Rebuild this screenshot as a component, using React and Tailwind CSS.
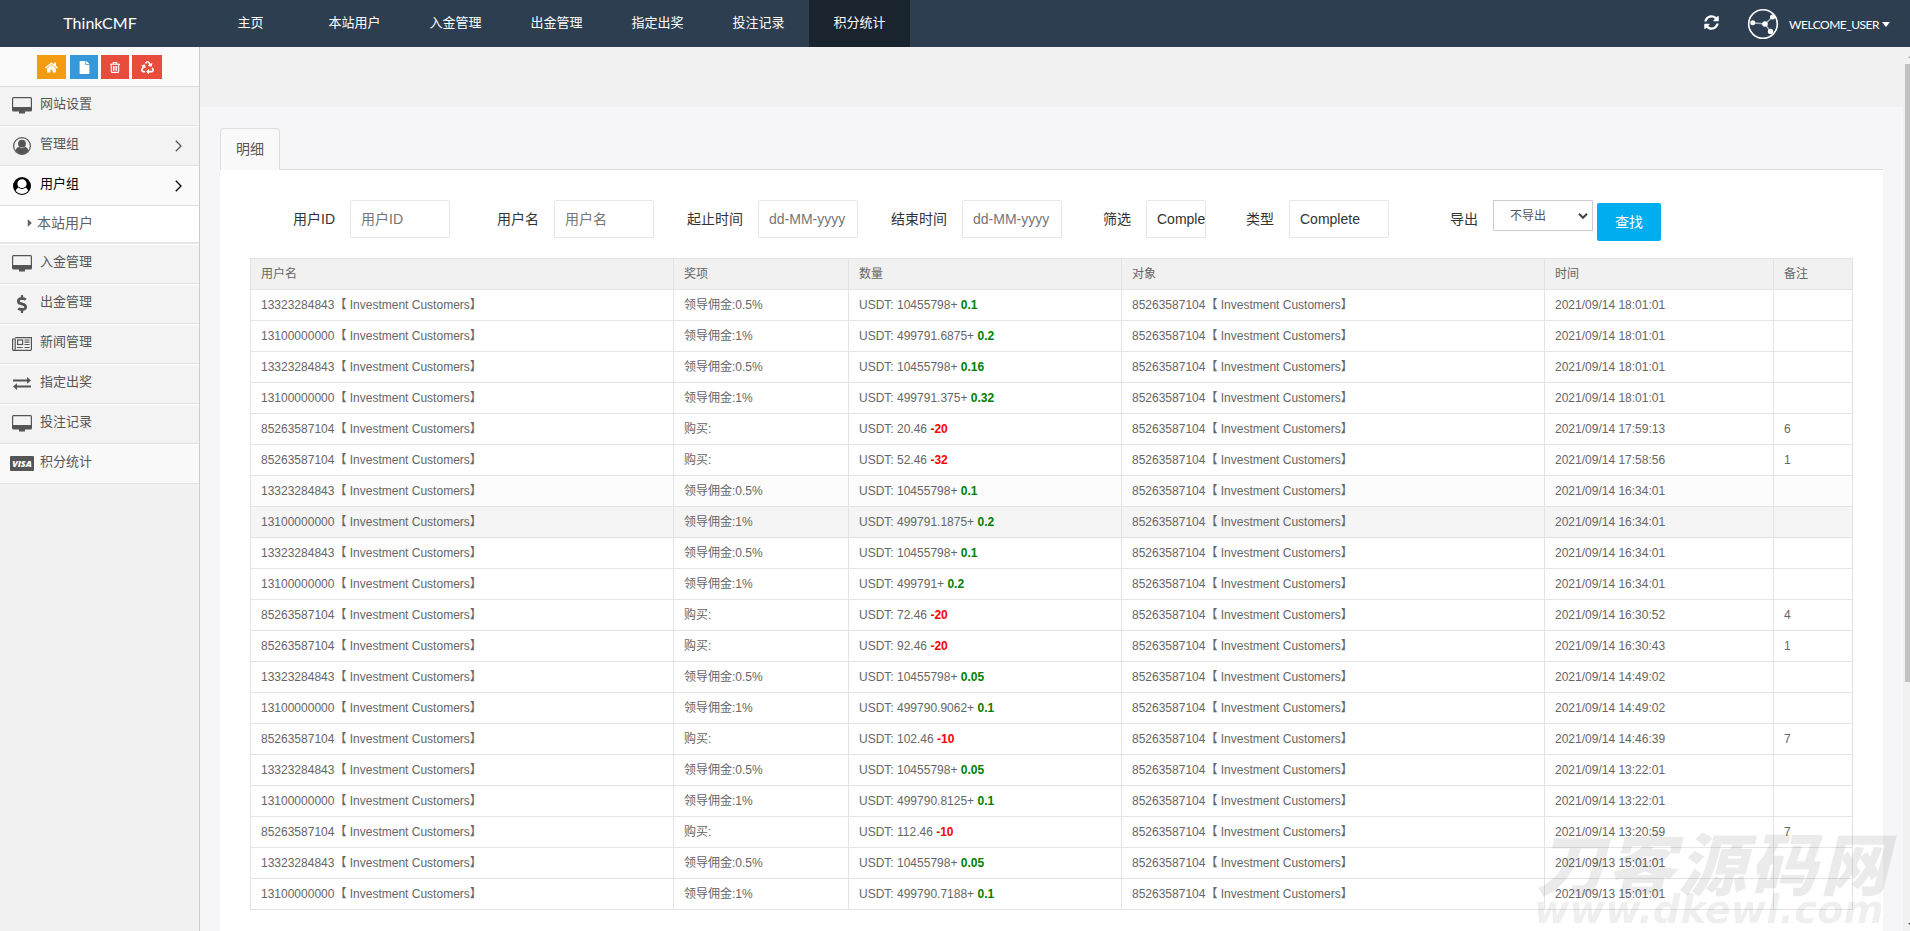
import {
  FaHome, FaFile, FaRecycle, FaDollarSign, FaCaretRight, FaSyncAlt,
} from 'react-icons/fa'

const NAV = ['本站用户', '入金管理', '出金管理', '指定出奖', '投注记录', '积分统计']

const ROWS = [
  ['13323284843', '领导佣金:0.5%', '10455798+', '0.1', '2021/09/14 18:01:01', ''],
  ['13100000000', '领导佣金:1%', '499791.6875+', '0.2', '2021/09/14 18:01:01', ''],
  ['13323284843', '领导佣金:0.5%', '10455798+', '0.16', '2021/09/14 18:01:01', ''],
  ['13100000000', '领导佣金:1%', '499791.375+', '0.32', '2021/09/14 18:01:01', ''],
  ['85263587104', '购买:', '20.46', '-20', '2021/09/14 17:59:13', '6'],
  ['85263587104', '购买:', '52.46', '-32', '2021/09/14 17:58:56', '1'],
  ['13323284843', '领导佣金:0.5%', '10455798+', '0.1', '2021/09/14 16:34:01', ''],
  ['13100000000', '领导佣金:1%', '499791.1875+', '0.2', '2021/09/14 16:34:01', ''],
  ['13323284843', '领导佣金:0.5%', '10455798+', '0.1', '2021/09/14 16:34:01', ''],
  ['13100000000', '领导佣金:1%', '499791+', '0.2', '2021/09/14 16:34:01', ''],
  ['85263587104', '购买:', '72.46', '-20', '2021/09/14 16:30:52', '4'],
  ['85263587104', '购买:', '92.46', '-20', '2021/09/14 16:30:43', '1'],
  ['13323284843', '领导佣金:0.5%', '10455798+', '0.05', '2021/09/14 14:49:02', ''],
  ['13100000000', '领导佣金:1%', '499790.9062+', '0.1', '2021/09/14 14:49:02', ''],
  ['85263587104', '购买:', '102.46', '-10', '2021/09/14 14:46:39', '7'],
  ['13323284843', '领导佣金:0.5%', '10455798+', '0.05', '2021/09/14 13:22:01', ''],
  ['13100000000', '领导佣金:1%', '499790.8125+', '0.1', '2021/09/14 13:22:01', ''],
  ['85263587104', '购买:', '112.46', '-10', '2021/09/14 13:20:59', '7'],
  ['13323284843', '领导佣金:0.5%', '10455798+', '0.05', '2021/09/13 15:01:01', ''],
  ['13100000000', '领导佣金:1%', '499790.7188+', '0.1', '2021/09/13 15:01:01', ''],
]

const DesktopIcon = () => (
  <svg width="20" height="17" viewBox="0 0 20 17" fill="currentColor">
    <path fillRule="evenodd" d="M1.5 0h17A1.5 1.5 0 0 1 20 1.500V13a1.500 1.500 0 0 1-1.500 1.500H13V16.500H7V14.500H1.500A1.500 1.500 0 0 1 0 13V1.500A1.500 1.500 0 0 1 1.500 0ZM1.200 1.200V10h17.600V1.200Z" />
  </svg>
)

// outlined circle with a filled bust
const UserIcon = () => (
  <svg width="18" height="18" viewBox="0 0 18 18">
    <circle cx="9" cy="9" r="8.400" fill="none" stroke="currentColor" strokeWidth="1.200" />
    <circle cx="9" cy="6.700" r="3.900" fill="currentColor" />
    <path d="M2.500 13.500c.6-2.400 2-3.400 3.500-3.500 1.800 1.500 4.200 1.500 6 0 1.500.1 2.900 1.100 3.500 3.500A8 8 0 0 1 9 17.200a8 8 0 0 1-6.500-3.700Z" fill="currentColor" />
  </svg>
)

// filled circle with a hollow bust
const UserSolidIcon = () => (
  <svg width="18" height="18" viewBox="0 0 18 18">
    <circle cx="9" cy="9" r="9" fill="currentColor" />
    <path d="M2.800 14c.5-2.400 1.900-3.300 3.400-3.600a4.600 4.600 0 1 1 5.600 0c1.500.3 2.900 1.200 3.400 3.600A8 8 0 0 1 9 17a8 8 0 0 1-6.200-3Z" fill="#fff" />
    <path d="M5.800 10.300c1.900 1.700 4.500 1.700 6.400 0" fill="none" stroke="currentColor" strokeWidth="1" />
  </svg>
)

const NewsIcon = () => (
  <svg width="20" height="14" viewBox="0 0 20 14" fill="none" stroke="currentColor" strokeWidth="1.200">
    <path d="M3.200.600H19.400V12.200a1.200 1.200 0 0 1-1.200 1.200H1.900A1.300 1.300 0 0 1 .600 12V2H3.200V12.200a1.200 1.200 0 0 1-1.200 1.200" />
    <rect x="5.600" y="3" width="5" height="4.500" />
    <path d="M12.500 3h5M12.500 5.200h5M12.500 7.500h5M5 10.500h5.600M12.500 10.500h5" />
  </svg>
)

const ExchangeIcon = () => (
  <svg width="18" height="13" viewBox="0 0 18 13" fill="currentColor">
    <path d="M0 2.400h14V0l4 3.400-4 3.300V4.500H0ZM18 8.500H4V6.300L0 9.600 4 13v-2.400h14Z" />
  </svg>
)

const TrashIcon = () => (
  <svg width="10" height="11" viewBox="0 0 10 11" fill="none" stroke="currentColor" strokeWidth="1.100">
    <path d="M0 2.200h10M3.200 2V.6h3.600V2M1.300 2.200v7.200c0 .6.400 1 1 1h5.400c.6 0 1-.4 1-1V2.200M3.400 4v4.700M5 4v4.700M6.600 4v4.700" />
  </svg>
)

const VisaIcon = () => (
  <span className="flex h-[15px] w-[24px] shrink-0 items-center justify-center rounded-[1px] bg-[#555] font-['Open_Sans'] text-[9px] font-extrabold italic leading-none text-white">
    VISA
  </span>
)

const DollarIcon = () => <FaDollarSign size={18} />

function Chevron() {
  return (
    <svg className="mr-[17px] mb-px" width="7" height="12" viewBox="0 0 7 12" fill="none" stroke="currentColor" strokeWidth="1.300">
      <path d="M.8.800 6 6 .8 11.200" />
    </svg>
  )
}

function MenuItem({ icon: Icon, label, arrow, className = '' }) {
  return (
    <div className={`flex h-10 items-center border-y border-b-[#e0e0e0] pl-[10px] ${className}`}>
      <span className="mb-px flex w-6 shrink-0 justify-center">
        <Icon />
      </span>
      <span className="ml-[6px] flex-1 pb-1 text-[13px]">{label}</span>
      {arrow && <Chevron />}
    </div>
  )
}

function Sidebar() {
  return (
    <aside className="w-[200px] shrink-0 border-r border-[#ccc] bg-[#f1f1f1] text-[#555]">
      <div className="flex h-[39px] items-start bg-[#fafafa] pl-[37px] pt-2 text-white">
        <span className="mr-1 flex h-6 w-[29px] items-center justify-center bg-[#f39c12]"><FaHome size={13} /></span>
        <span className="mr-[3px] flex h-6 w-7 items-center justify-center bg-[#3498db]"><FaFile size={13} /></span>
        <span className="mr-[3px] flex h-6 w-7 items-center justify-center bg-[#e74c3c]"><TrashIcon /></span>
        <span className="flex h-6 w-[30px] items-center justify-center bg-[#e74c3c]"><FaRecycle size={13} /></span>
      </div>
      <MenuItem icon={DesktopIcon} label="网站设置" className="border-t-[#ddd] bg-[#f3f3f3]" />
      <MenuItem icon={UserIcon} label="管理组" arrow className="border-t-white bg-[#f3f3f3]" />
      <MenuItem icon={UserSolidIcon} label="用户组" arrow className="border-t-white bg-[#fafafa] text-black" />
      <div className="flex h-[38px] items-center border-b-2 border-[#e5e5e5] bg-white pb-[2px] pl-6 text-sm text-[#616161]">
        <FaCaretRight size={12} className="mr-px" />
        本站用户
      </div>
      <MenuItem icon={DesktopIcon} label="入金管理" className="border-t-white bg-[#f3f3f3]" />
      <MenuItem icon={DollarIcon} label="出金管理" className="border-t-white bg-[#f3f3f3]" />
      <MenuItem icon={NewsIcon} label="新闻管理" className="border-t-white bg-[#f3f3f3]" />
      <MenuItem icon={ExchangeIcon} label="指定出奖" className="border-t-white bg-[#f3f3f3]" />
      <MenuItem icon={DesktopIcon} label="投注记录" className="border-t-white bg-[#f3f3f3]" />
      <MenuItem icon={VisaIcon} label="积分统计" className="border-t-white bg-[#f9f9f9]" />
    </aside>
  )
}

function Header() {
  return (
    <header className="flex h-[47px] shrink-0 items-center bg-[#2c3e50] text-[13px] text-white">
      <div className="w-[200px] pb-[2px] text-center font-[Lato,sans-serif] text-[16px]">ThinkCMF</div>
      <nav className="ml-[13px] flex h-full items-center">
        <span className="mr-4 w-[75px] pb-px text-center">主页</span>
        {NAV.map((n) => (
          <span
            key={n}
            className={`flex h-full w-[101px] items-center justify-center pb-px ${n === '积分统计' ? 'bg-[#1a242f]' : ''}`}
          >
            {n}
          </span>
        ))}
      </nav>
      <div className="ml-auto flex items-center pr-[20px]">
        <FaSyncAlt size={15} className="mb-[3px] mr-[28px]" />
        <svg width="32" height="32" viewBox="0 0 32 32" className="mr-[10px]">
          <circle cx="16" cy="16" r="14.300" fill="none" stroke="#fff" strokeWidth="1.600" />
          <path d="M5.500 14.800 18 16l7.500-7M18 16l5.500 7.500" fill="none" stroke="#aab4be" strokeWidth="1.400" />
          <g fill="#fff">
            <circle cx="5.800" cy="14.800" r="2.500" />
            <circle cx="18" cy="16" r="2.800" />
            <circle cx="25.500" cy="9" r="2.500" />
            <circle cx="23.500" cy="23.500" r="2.700" />
          </g>
        </svg>
        <span className="mt-[2px] font-[Lato,sans-serif] text-[12px] tracking-[-0.5px]">WELCOME_USER</span>
        <svg width="8" height="5" viewBox="0 0 8 5" fill="currentColor" className="ml-[3px] mt-[2px]">
          <path d="M0 0h8L4 5Z" />
        </svg>
      </div>
    </header>
  )
}

function Field({ label, placeholder, value, labelClass, inputClass = 'w-[100px]' }) {
  return (
    <label className="flex items-center">
      <span className={`pr-[15px] text-right ${labelClass}`}>{label}</span>
      <input
        className={`h-[38px] rounded-[2px] border border-[#e6e6e6] bg-white pl-[10px] placeholder:text-[#757575] ${inputClass}`}
        placeholder={placeholder}
        defaultValue={value}
      />
    </label>
  )
}

function Filters() {
  return (
    <div className="flex items-start text-sm text-[#333]">
      <Field label="用户ID" placeholder="用户ID" labelClass="w-[100px]" />
      <Field label="用户名" placeholder="用户名" labelClass="w-[104px]" />
      <Field label="起止时间" placeholder="dd-MM-yyyy" labelClass="w-[104px]" />
      <Field label="结束时间" placeholder="dd-MM-yyyy" labelClass="w-[104px]" />
      <Field label="筛选" value="Complete" labelClass="w-[84px]" inputClass="w-[60px]" />
      <Field label="类型" value="Complete" labelClass="w-[83px]" />
      <span className="w-[104px] pr-[15px] pt-[9px] text-right">导出</span>
      <div className="flex h-[31px] w-[100px] items-center justify-between border border-[#ccc] bg-white pl-4 pr-1 text-xs text-[#555]">
        不导出
        <svg width="10" height="6" viewBox="0 0 10 6" fill="none" stroke="#444" strokeWidth="2">
          <path d="M1 .8 5 4.800 9 .8" />
        </svg>
      </div>
      <button className="ml-1 mt-[3px] h-[38px] w-16 rounded-[2px] bg-[#00aeef] text-sm text-white">查找</button>
    </div>
  )
}

function Records() {
  return (
    <table className="mt-[17px] w-[1603px] table-fixed border-collapse text-left text-xs text-[#666]">
      <colgroup>
        <col className="w-[423px]" />
        <col className="w-[175px]" />
        <col className="w-[273px]" />
        <col className="w-[423px]" />
        <col className="w-[229px]" />
        <col className="w-[79px]" />
      </colgroup>
      <thead>
        <tr className="h-[31px] bg-[#f1f1f1]">
          {['用户名', '奖项', '数量', '对象', '时间', '备注'].map((h) => (
            <th key={h} className="border border-[#e3e3e3] px-[10px] py-0 font-normal">{h}</th>
          ))}
        </tr>
      </thead>
      <tbody>
        {ROWS.map(([user, prize, amount, delta, time, note], i) => (
          <tr key={i} className={`h-[31px] ${i === 7 ? 'bg-[#f5f5f5]' : i === 6 ? 'bg-[#fcfcfc]' : ''}`}>
            <td className="border border-[#e3e3e3] px-[10px] py-0">{user}【 Investment Customers】</td>
            <td className="border border-[#e3e3e3] px-[10px] py-0">{prize}</td>
            <td className="border border-[#e3e3e3] px-[10px] py-0">
              USDT: {amount}{' '}
              <b className={delta.startsWith('-') ? 'text-[#f00]' : 'text-[#008000]'}>{delta}</b>
            </td>
            <td className="border border-[#e3e3e3] px-[10px] py-0">85263587104【 Investment Customers】</td>
            <td className="border border-[#e3e3e3] px-[10px] py-0">{time}</td>
            <td className="border border-[#e3e3e3] px-[10px] py-0">{note}</td>
          </tr>
        ))}
      </tbody>
    </table>
  )
}

export default function App() {
  return (
    <div className="relative flex h-[931px] w-[1910px] flex-col overflow-hidden bg-[#f6f6f9] font-['Liberation_Sans','Noto_Sans_CJK_SC',sans-serif]">
      <Header />
      <div className="flex min-h-0 flex-1">
        <Sidebar />
        <main className="flex min-w-0 flex-1 flex-col">
          <div className="h-[60px] shrink-0 bg-[#f1f1f1]" />
          <div className="ml-5 mr-5 mt-[21px] flex shrink-0 border-b border-[#ddd]">
            <div className="-mb-px flex h-[42px] w-[60px] items-center justify-center rounded-t border border-b-0 border-[#ddd] bg-[#f9f9f9] pb-[2px] text-sm text-[#555]">
              明细
            </div>
          </div>
          <div className="ml-5 mr-5 flex-1 bg-white pl-[30px] pt-[30px]">
            <Filters />
            <Records />
          </div>
        </main>
        <div className="flex w-[7px] shrink-0 flex-col justify-between bg-[#f1f1f1] pb-1 pl-[2px]">
          <svg width="5" height="17" viewBox="0 0 5 17" fill="#999">
            <path d="M3 11 5 9v2Z" />
          </svg>
          <div className="h-[618px] bg-[#c1c1c1]" />
          <svg className="mt-auto" width="5" height="4" viewBox="0 0 5 4" fill="#505050">
            <path d="M3 0h2v2Z" />
          </svg>
        </div>
      </div>
      {/* site watermark */}
      <div className="pointer-events-none absolute bottom-[2px] right-[10px] w-[366px] font-black italic leading-none text-black/8">
        <div className="whitespace-nowrap pl-[2px] text-[68px] tracking-[3px]">刀客源码网</div>
        <div className="-mt-[9px] whitespace-nowrap font-['DejaVu_Sans',sans-serif] text-[38.5px] font-bold">www.dkewl.com</div>
      </div>
    </div>
  )
}
